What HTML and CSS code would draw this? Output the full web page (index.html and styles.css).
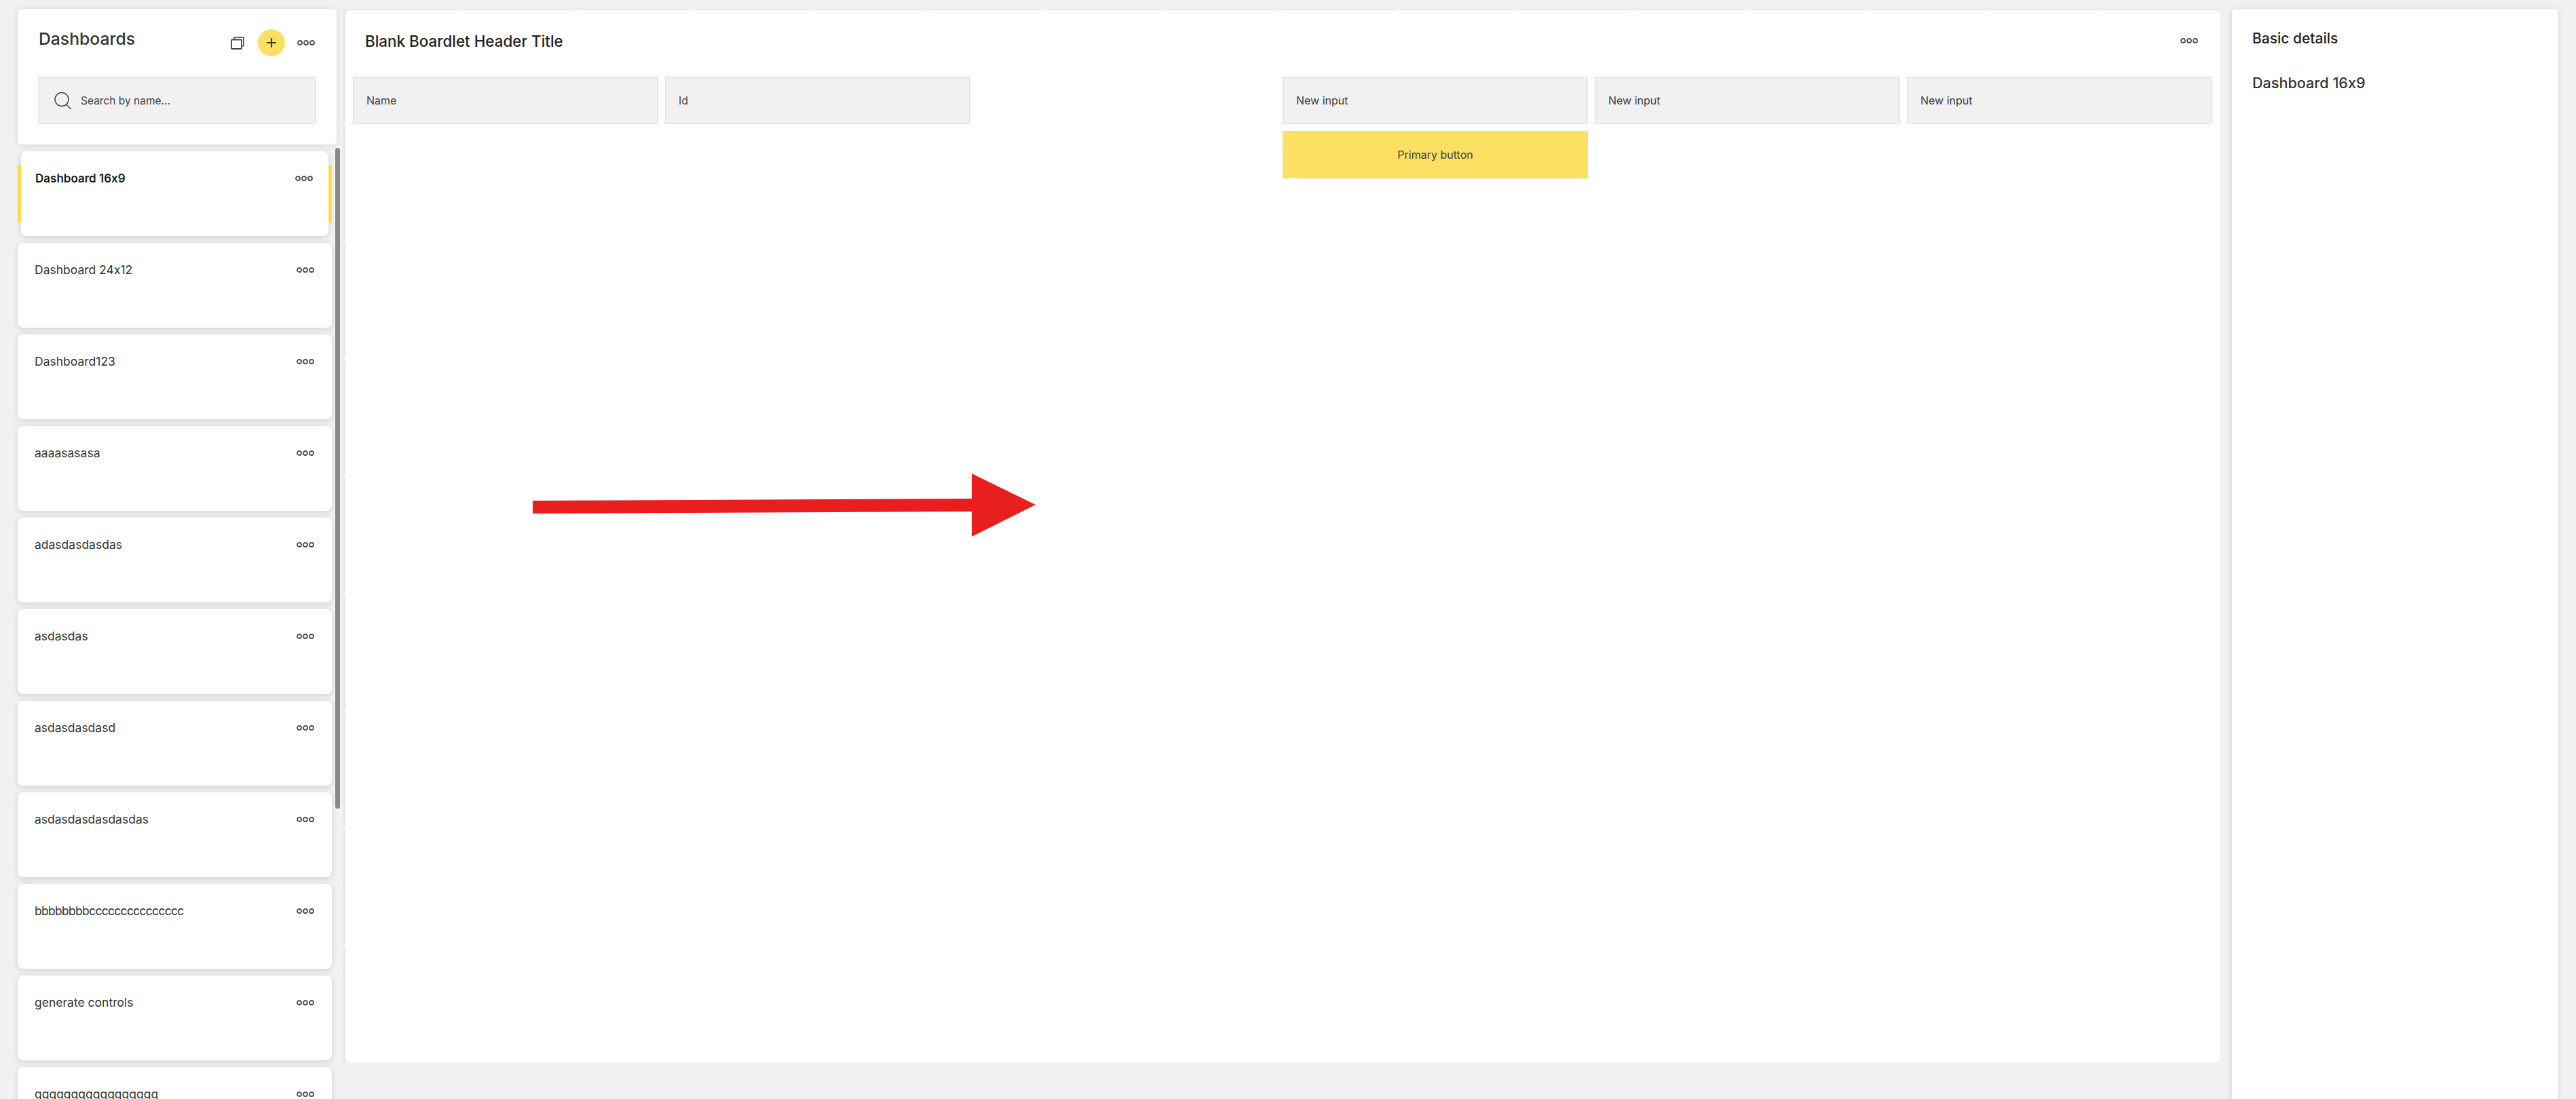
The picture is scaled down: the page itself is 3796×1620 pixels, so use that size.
FILE: index.html
```html
<!DOCTYPE html>
<html lang="en">
<head>
<meta charset="utf-8">
<title>Dashboards</title>
<link rel="stylesheet" href="styles.css">
</head>
<body>
<svg class="sprite" width="0" height="0" aria-hidden="true">
  <symbol id="dots" viewBox="0 0 26 10">
    <circle cx="4" cy="5" r="3" fill="none" stroke="currentColor" stroke-width="1.8"/>
    <circle cx="13" cy="5" r="3" fill="none" stroke="currentColor" stroke-width="1.8"/>
    <circle cx="22" cy="5" r="3" fill="none" stroke="currentColor" stroke-width="1.8"/>
  </symbol>
</svg>
<div class="app">
  <aside class="sidebar">
    <header class="side-head">
      <div class="side-top">
        <h1 class="side-title">Dashboards</h1>
        <div class="side-actions">
          <svg class="icon-copy" viewBox="0 0 20 19" width="20" height="19">
            <path d="M5 4V2a1 1 0 0 1 1-1h12a1 1 0 0 1 1 1v11a1 1 0 0 1-1 1h-2" fill="none" stroke="#444" stroke-width="1.6"/>
            <rect x="1" y="4.5" width="15" height="13.5" rx="1" fill="#fff" stroke="#444" stroke-width="1.8"/>
          </svg>
          <span class="add-btn">
            <svg viewBox="0 0 14 14" width="14" height="14"><path d="M7 0v14M0 7h14" stroke="#3a3a3a" stroke-width="2.2"/></svg>
          </span>
          <svg class="dots dots-head"><use href="#dots"/></svg>
        </div>
      </div>
      <div class="search">
        <svg class="icon-search" viewBox="0 0 26 25" width="26" height="25">
          <circle cx="11" cy="10.5" r="10" fill="none" stroke="#444" stroke-width="1.5"/>
          <path d="M17.5 18l7.5 7" stroke="#444" stroke-width="1.5" fill="none"/>
        </svg>
        <span>Search by name...</span>
      </div>
    </header>
    <div class="list-wrap">
      <span class="scroll-thumb"></span>
      <ul class="list">
        <li class="card selected"><span>Dashboard 16x9</span><svg class="dots"><use href="#dots"/></svg></li>
        <li class="card"><span>Dashboard 24x12</span><svg class="dots"><use href="#dots"/></svg></li>
        <li class="card"><span>Dashboard123</span><svg class="dots"><use href="#dots"/></svg></li>
        <li class="card"><span>aaaasasasa</span><svg class="dots"><use href="#dots"/></svg></li>
        <li class="card"><span>adasdasdasdas</span><svg class="dots"><use href="#dots"/></svg></li>
        <li class="card"><span>asdasdas</span><svg class="dots"><use href="#dots"/></svg></li>
        <li class="card"><span>asdasdasdasd</span><svg class="dots"><use href="#dots"/></svg></li>
        <li class="card"><span>asdasdasdasdasdas</span><svg class="dots"><use href="#dots"/></svg></li>
        <li class="card"><span class="tight">bbbbbbbbccccccccccccccc</span><svg class="dots"><use href="#dots"/></svg></li>
        <li class="card"><span>generate controls</span><svg class="dots"><use href="#dots"/></svg></li>
        <li class="card"><span>qqqqqqqqqqqqqqqqq</span><svg class="dots"><use href="#dots"/></svg></li>
      </ul>
    </div>
  </aside>

  <div class="canvas">
    <main class="board">
      <div class="board-head">
        <h2 class="board-title">Blank Boardlet Header Title</h2>
        <svg class="dots"><use href="#dots"/></svg>
      </div>
      <div class="board-body">
        <div class="fields">
          <div class="field">Name</div>
          <div class="field">Id</div>
        </div>
        <div class="fields fields-right">
          <div class="field">New input</div>
          <div class="field">New input</div>
          <div class="field">New input</div>
          <div class="primary">Primary button</div>
        </div>
      </div>
    </main>
    <svg class="arrow" viewBox="0 0 741 93" width="741" height="93">
      <polygon points="0,40 647,37 647,0 741,46 647,93 647,56 0,59" fill="#e81f1e"/>
    </svg>
  </div>

  <aside class="details">
    <h2 class="details-title">Basic details</h2>
    <p class="details-value">Dashboard 16x9</p>
  </aside>
</div>
</body>
</html>
```
FILE: styles.css
```css
* { box-sizing: border-box; }
html, body { margin: 0; height: 100%; }
body {
  background: #f1f1f1;
  font-family: Inter, "Noto Sans", "Liberation Sans", sans-serif;
  font-feature-settings: "calt" 0;
  color: #3a3a3a;
  overflow: hidden;
}
.sprite { position: absolute; }
.app {
  display: flex;
  align-items: flex-start;
  height: 1620px;
  padding: 13px 0 0 26px;
  overflow: hidden;
}

/* sidebar */
.sidebar { width: 475px; flex: none; }
.side-head {
  width: 470px;
  height: 200px;
  padding: 30px 30px;
  background: #fff;
  border-radius: 6px;
  box-shadow: 0 1px 8px rgba(0, 0, 0, .12);
  position: relative;
  z-index: 1;
}
.side-top { display: flex; justify-content: space-between; height: 40px; margin-bottom: 30px; }
.side-title { margin: 0 0 0 1px; font-size: 24.7px; line-height: 28px; font-weight: 500; color: #333; }
.side-actions { display: flex; align-items: center; padding-right: 2px; }
.icon-copy { margin-right: 20px; }
.add-btn {
  display: flex; align-items: center; justify-content: center;
  width: 40px; height: 40px; border-radius: 50%;
  background: #fbe064;
  margin-right: 18px;
}
.dots { width: 26px; height: 10px; color: #505050; flex: none; display: block; }
.search {
  display: flex; align-items: center;
  height: 70px;
  padding-left: 22px;
  background: #f1f1f1;
  border: 2px solid #e6e6e6;
  font-size: 15.5px;
  color: #444;
}
.icon-search { margin-right: 13px; }

.list-wrap { position: relative; }
.scroll-thumb {
  position: absolute;
  left: 468px; top: 5px;
  width: 7px; height: 974px;
  border-radius: 4px;
  background: #8a8a8a;
  z-index: 2;
}
.list { list-style: none; margin: 0; padding: 10px 0 0; width: 463px; display: flex; flex-direction: column; gap: 10px; }
.card {
  position: relative;
  flex: none;
  height: 125px;
  padding: 30px 25px 0 25px;
  background: #fff;
  border-radius: 8px;
  box-shadow: 0 2px 10px rgba(0, 0, 0, .14);
  display: flex;
  justify-content: space-between;
  align-items: flex-start;
  font-size: 17.5px;
  line-height: 20px;
  color: #333;
}
.tight { letter-spacing: -.7px; }
.card .dots { margin-top: 5px; margin-right: 1px; }
.selected {
  margin: 0 5px;
  padding-left: 21px;
  padding-right: 22px;
  color: #1a1a1a;
  font-weight: 600;
  font-size: 17px;
}
.selected::before,
.selected::after {
  content: "";
  position: absolute;
  top: 20px; bottom: 20px;
  width: 5px;
  background: #f9dd4d;
}
.selected::before { left: -5px; }
.selected::after { right: -5px; }

/* main */
.canvas {
  position: relative;
  flex: none;
  width: 2763px;
  height: 1552px;
  margin-left: 5px;
  padding: 2px 0 0 3px;
  background-image:
    repeating-linear-gradient(180deg, transparent 0 168px, #f1f1f1 168px 173px),
    repeating-linear-gradient(90deg, #e6e6e6 0 168px, #f1f1f1 168px 173px);
}
.board {
  width: 2762px;
  height: 1551px;
  background: #fff;
  border-radius: 6px;
  padding: 0 11px;
}
.board-head {
  display: flex; align-items: center; justify-content: space-between;
  height: 90px;
  margin-bottom: 8px;
  padding: 0 21px 0 18px;
}
.board-title { margin: 0; font-size: 22.4px; font-weight: 500; color: #222; }
.board-body { display: flex; justify-content: space-between; align-items: flex-start; }
.fields { display: grid; grid-template-columns: repeat(2, 450px); gap: 10px; }
.fields-right { grid-template-columns: repeat(3, 450px); }
.field {
  height: 70px;
  display: flex; align-items: center;
  padding-left: 18px;
  background: #f1f1f1;
  border: 2px solid #e6e6e6;
  font-size: 16px;
  color: #404040;
}
.primary {
  height: 70px;
  display: flex; align-items: center; justify-content: center;
  background: #fbe064;
  font-size: 16px;
  color: #404035;
}
.arrow { position: absolute; left: 279px; top: 685px; }

/* details */
.details {
  flex: none;
  width: 480px;
  height: 1700px;
  margin-left: 20px;
  padding: 0 30px;
  background: #fff;
  border-radius: 6px;
  box-shadow: 0 1px 8px rgba(0, 0, 0, .14);
}
.details-title { margin: 30px 0 0; font-size: 21px; line-height: 28px; font-weight: 500; color: #222; }
.details-value { margin: 37px 0 0; font-size: 21.6px; line-height: 28px; font-weight: 500; color: #333; }
```
